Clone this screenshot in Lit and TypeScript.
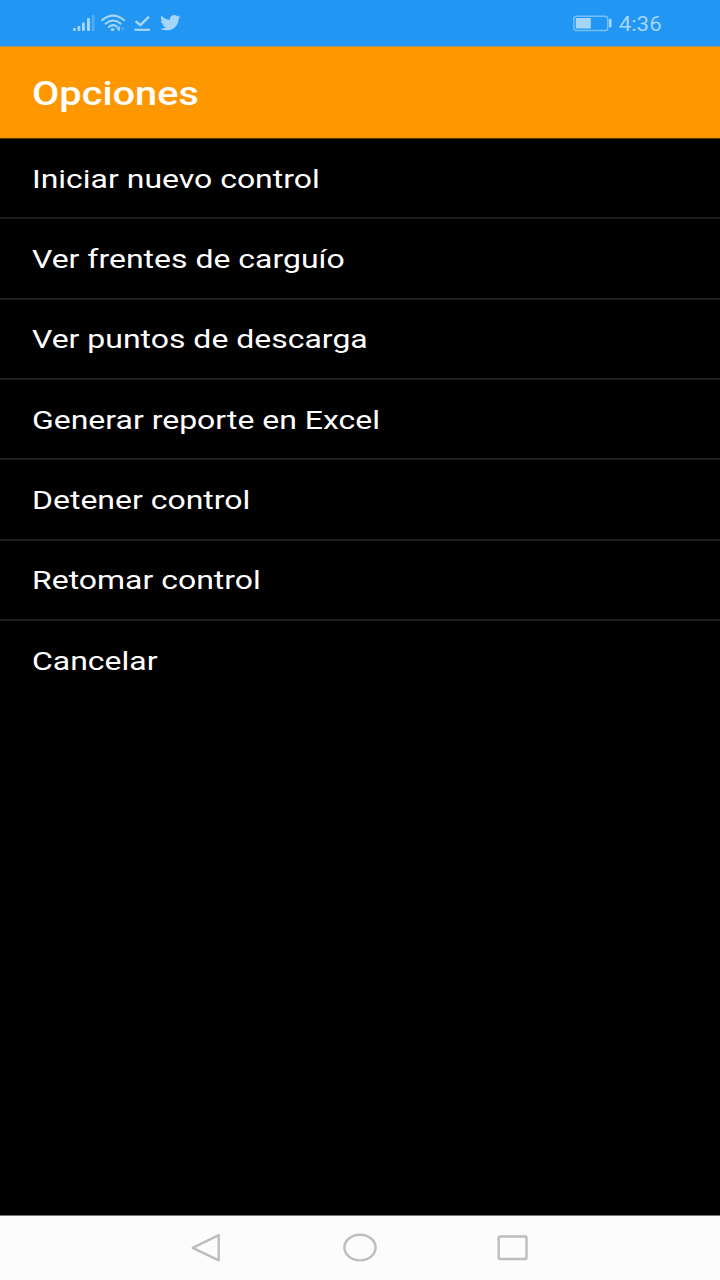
import { LitElement, html, css } from "lit";
import { customElement } from "lit/decorators.js";

const OPTIONS = [
  "Iniciar nuevo control",
  "Ver frentes de carguío",
  "Ver puntos de descarga",
  "Generar reporte en Excel",
  "Detener control",
  "Retomar control",
  "Cancelar",
];

@customElement("app-root")
export class AppRoot extends LitElement {
  static styles = css`
    :host { display: flex; flex-direction: column; height: 1280px; width: 720px; background: #000; font-family: Roboto, sans-serif; color: #fff; overflow: hidden; }
    .status { box-sizing: border-box; height: 47px; background: #2196f3; flex: none; display: flex; justify-content: space-between; padding: 0 58px 0 72px; border-bottom: 1px solid #a8976b; }
    svg { display: block; }
    .time { font: 20px Roboto, sans-serif; fill: #a6d5fa; }
    .bar { box-sizing: border-box; height: 92px; background: #ff9800; flex: none; padding: 2px 0 0 32px; display: flex; align-items: center; border-bottom: 1px solid #5e3800; }
    .bar span { display: inline-block; font-size: 33px; font-weight: 500; transform-origin: 0 50%; transform: scaleX(1.203); }
    .list { flex: 1; margin: 0; padding: 0; list-style: none; }
    .item { box-sizing: border-box; height: 80.33px; padding-left: 32px; display: flex; align-items: center; border-bottom: 2px solid #1c1c1c; }
    .item:last-child { border-color: transparent; }
    .item span { display: inline-block; font-size: 26.5px; transform-origin: 0 50%; transform: scaleX(1.206); white-space: nowrap; }
    .nav { box-sizing: border-box; height: 65px; flex: none; background: #fcfcfc; border-top: 1px solid #777; display: flex; justify-content: center; gap: 116px; align-items: center; }
  `;
  render() {
    return html`
      <div class="status">
        <svg width="112" height="46" viewBox="72 0 112 46" fill="#a6d5fa">
          <rect x="73" y="28" width="2.8" height="3" rx="1" />
          <rect x="77.5" y="26" width="2.8" height="5" rx="1" />
          <rect x="82" y="22.5" width="2.8" height="8.5" rx="1" />
          <rect x="87" y="18" width="3" height="13" rx="1" />
          <rect x="91.8" y="15" width="2.8" height="16" rx="1" opacity=".35" />
          <g fill="none" stroke="#a6d5fa" stroke-width="2" stroke-linecap="round">
            <path d="M102 20.2Q113 11 124.200 20.200" />
            <path d="M105.500 23.700Q113 17.400 120.700 23.700" />
            <path d="M108.800 27Q113 23.500 117 26.600" />
          </g>
          <ellipse cx="112.600" cy="29.400" rx="1.900" ry="1.500" />
          <path d="M119.800 26v5.400l-3.300-2.700Z" />
          <path d="M121.500 26l3 2.700l-3 2.700Z" opacity=".35" />
          <path d="M135.700 21.200L140.300 25.100L149 16.700" fill="none" stroke="#a6d5fa" stroke-width="2.500" />
          <rect x="134.500" y="28.700" width="15.500" height="2.200" />
          <g transform="translate(160 13.400) scale(.86 .78)">
            <path d="M23.950 4.570a10 10 0 0 1-2.820.77 4.960 4.960 0 0 0 2.160-2.720c-.95.550-2 .950-3.120 1.180a4.920 4.920 0 0 0-8.380 4.480C7.690 8.090 4.070 6.130 1.640 3.160a4.820 4.820 0 0 0-.67 2.480c0 1.710.87 3.210 2.190 4.100a4.900 4.900 0 0 1-2.230-.62v.06a4.920 4.920 0 0 0 3.950 4.830 5 5 0 0 1-2.210.08 4.940 4.940 0 0 0 4.600 3.420A9.870 9.870 0 0 1 0 19.540a14 14 0 0 0 7.550 2.210c9.050 0 13.990-7.500 13.990-13.990 0-.21 0-.42-.02-.63A9.940 9.940 0 0 0 24 4.590Z" />
          </g>
        </svg>
        <svg width="90" height="46" viewBox="572 0 90 46">
          <rect x="573.800" y="16.200" width="34" height="14.300" rx="2.500" fill="none" stroke="#a6d5fa" stroke-opacity=".65" stroke-width="1.400" />
          <rect x="575.800" y="18" width="15" height="10.500" fill="#a6d5fa" />
          <rect x="609" y="18.800" width="2.600" height="8.700" rx="1" fill="#a6d5fa" />
          <text class="time" x="618.700" y="30.500" textLength="43" lengthAdjust="spacingAndGlyphs">4:36</text>
        </svg>
      </div>
      <div class="bar"><span>Opciones</span></div>
      <ul class="list">${OPTIONS.map((o) => html`<li class="item"><span>${o}</span></li>`)}</ul>
      <div class="nav">
        <svg width="36" height="36" viewBox="190 1230 36 36" fill="none" stroke="#bdbdbd" stroke-width="2.400" stroke-linejoin="round"><path d="M192.700 1247.800L218.700 1235.200V1260.300Z" /></svg>
        <svg width="36" height="36" viewBox="342 1230 36 36" fill="none" stroke="#bdbdbd" stroke-width="2.400"><ellipse cx="360" cy="1247.600" rx="15.600" ry="12.800" /></svg>
        <svg width="36" height="36" viewBox="494 1230 36 36" fill="none" stroke="#bdbdbd" stroke-width="2.400"><rect x="498.700" y="1236.500" width="27.800" height="22.500" rx="1.500" /></svg>
      </div>
    `;
  }
}
